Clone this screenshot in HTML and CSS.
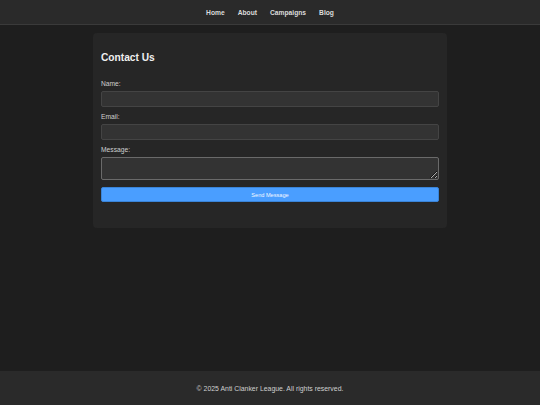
FILE: index.html
```html
<!DOCTYPE html>
<html lang="en">
<head>
<meta charset="utf-8">
<title>Contact Us</title>
<link rel="stylesheet" href="styles.css">
</head>
<body>
<header class="site-header">
  <nav class="nav">
    <a href="#">Home</a>
    <a href="#">About</a>
    <a href="#">Campaigns</a>
    <a href="#">Blog</a>
  </nav>
</header>
<main class="main">
  <section class="card">
    <h2 class="title">Contact Us</h2>
    <form class="form">
      <label class="label" for="name">Name:</label>
      <input class="field" id="name" type="text">
      <label class="label" for="email">Email:</label>
      <input class="field" id="email" type="email">
      <label class="label" for="msg">Message:</label>
      <textarea class="field area" id="msg"></textarea>
      <button class="btn" type="button">Send Message</button>
    </form>
  </section>
</main>
<footer class="footer">© 2025 Anti Clanker League. All rights reserved.</footer>
</body>
</html>
```
FILE: styles.css
```css
* { box-sizing: border-box; }
html, body { height: 100%; }
body {
  margin: 0;
  background: #1e1e1e;
  color: #e0e0e0;
  font-family: "Liberation Sans", Arial, sans-serif;
  display: flex;
  flex-direction: column;
  min-height: 100vh;
}
.site-header {
  background: #2a2a2a;
  border-bottom: 1px solid #3a3a3a;
  height: 25px;
  display: flex;
  align-items: center;
  justify-content: center;
}
.nav {
  display: flex;
  gap: 13px;
  padding-top: 1px;
}
.nav a {
  color: #dcdcdc;
  text-decoration: none;
  font-weight: bold;
  font-size: 6.7px;
}
.main {
  flex: 1;
  padding-top: 8px;
}
.card {
  width: 354px;
  margin: 0 auto;
  background: #262626;
  border-radius: 4px;
  padding: 18px 8px 26px;
}
.title {
  margin: 0 0 16px;
  font-size: 10.2px;
  line-height: 13px;
  font-weight: bold;
  color: #f0f0f0;
}
.form {
  display: flex;
  flex-direction: column;
}
.label {
  font-size: 6.7px;
  line-height: 8px;
  color: #cfcfcf;
  margin-bottom: 3px;
}
.field {
  display: block;
  width: 100%;
  height: 16px;
  background: #333333;
  border: 1px solid #444444;
  border-radius: 2px;
  margin: 0 0 6px;
  color: #eee;
  font: 7px "Liberation Sans", Arial, sans-serif;
}
.area {
  height: 23px;
  border-color: #6a6a6a;
  resize: vertical;
  margin-bottom: 7px;
}
.btn {
  height: 15px;
  background: #4a9eff;
  border: 1px solid #3a84d8;
  border-radius: 2px;
  color: #f4f8ff;
  font: 5.6px "Liberation Sans", Arial, sans-serif;
  padding: 0;
}
.footer {
  background: #2a2a2a;
  height: 34px;
  display: flex;
  align-items: center;
  justify-content: center;
  font-size: 6.9px;
  color: #d0d0d0;
}
```
